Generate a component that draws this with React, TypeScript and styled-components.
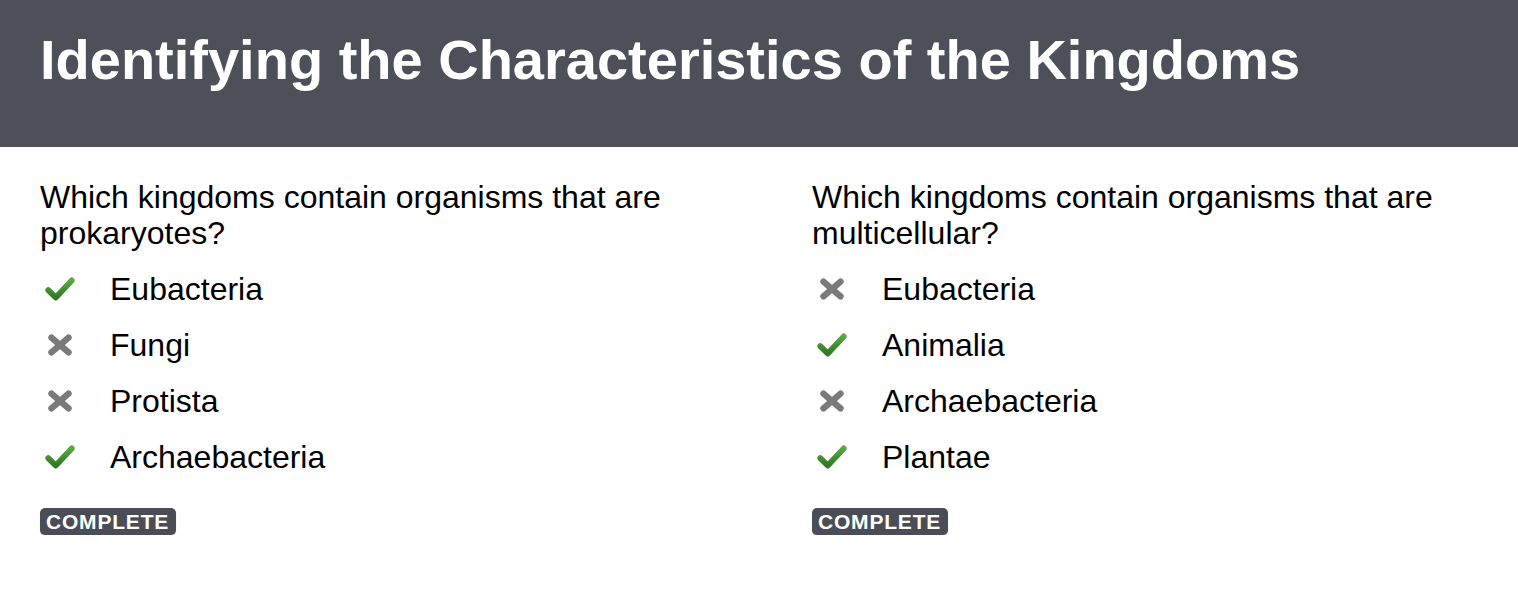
import React from "react";
import styled, { createGlobalStyle } from "styled-components";

const Global = createGlobalStyle`
  html, body { margin: 0; padding: 0; background: #fff; }
  body { font-family: "Liberation Sans", Arial, sans-serif; color: #000; }
`;

const Header = styled.header`
  background: #4d5058;
  height: 147px;
  padding: 0 40px;
  box-sizing: border-box;
  display: flex;
  align-items: flex-start;
`;

const Title = styled.h1`
  margin: 0;
  padding-top: 27px;
  font-size: 56px;
  line-height: 66px;
  font-weight: 700;
  color: #fff;
`;

const Body = styled.main`
  display: grid;
  grid-template-columns: 772px 700px;
  padding: 32px 40px 0;
`;

const Column = styled.section`
  display: flex;
  flex-direction: column;
  align-items: flex-start;
  width: 700px;
`;

const Question = styled.p`
  margin: 0 0 10px;
  font-size: 32px;
  line-height: 36px;
`;

const List = styled.ul`
  list-style: none;
  margin: 0;
  padding: 0;
  display: flex;
  flex-direction: column;
`;

const Item = styled.li`
  display: flex;
  align-items: center;
  height: 56px;
  font-size: 32px;
`;

const IconBox = styled.span`
  width: 40px;
  margin: 0 26px 0 4px;
  display: flex;
  align-items: center;
`;

const Badge = styled.span`
  margin-top: 23px;
  background: #4a4d55;
  color: #fff;
  font-weight: 700;
  font-size: 21px;
  letter-spacing: 0.8px;
  line-height: 27px;
  height: 27px;
  padding: 0 7px 0 6px;
  border-radius: 5px;
  box-shadow: 0 1px 1px rgba(0,0,0,0.25);
`;

const Check = () => (
  <svg width="32" height="28" viewBox="0 0 30 26">
    <defs>
      <linearGradient id="g" x1="0" y1="0" x2="0" y2="1">
        <stop offset="0" stopColor="#5aa844" />
        <stop offset="1" stopColor="#2f7a22" />
      </linearGradient>
    </defs>
    <path d="M4 14 L11 21 L26 5" fill="none" stroke="url(#g)" strokeWidth="5.5" strokeLinecap="round" strokeLinejoin="round" />
  </svg>
);

const Cross = () => (
  <svg width="32" height="28" viewBox="0 0 30 26">
    <path d="M7 6 L23 20 M23 6 L7 20" fill="none" stroke="#7a7a7a" strokeWidth="6" strokeLinecap="round" />
  </svg>
);

type Opt = { label: string; ok: boolean };

const data: { q: string; opts: Opt[] }[] = [
  {
    q: "Which kingdoms contain organisms that are prokaryotes?",
    opts: [
      { label: "Eubacteria", ok: true },
      { label: "Fungi", ok: false },
      { label: "Protista", ok: false },
      { label: "Archaebacteria", ok: true },
    ],
  },
  {
    q: "Which kingdoms contain organisms that are multicellular?",
    opts: [
      { label: "Eubacteria", ok: false },
      { label: "Animalia", ok: true },
      { label: "Archaebacteria", ok: false },
      { label: "Plantae", ok: true },
    ],
  },
];

export default function App() {
  return (
    <>
      <Global />
      <Header>
        <Title>Identifying the Characteristics of the Kingdoms</Title>
      </Header>
      <Body>
        {data.map((d, i) => (
          <Column key={i}>
            <Question>{d.q}</Question>
            <List>
              {d.opts.map((o) => (
                <Item key={o.label}>
                  <IconBox>{o.ok ? <Check /> : <Cross />}</IconBox>
                  {o.label}
                </Item>
              ))}
            </List>
            <Badge>COMPLETE</Badge>
          </Column>
        ))}
      </Body>
    </>
  );
}
